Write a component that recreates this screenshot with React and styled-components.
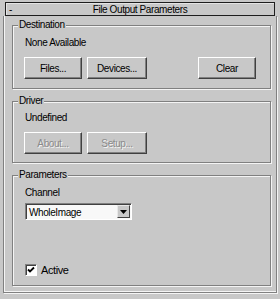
import styled, { createGlobalStyle } from 'styled-components';

const GlobalStyle = createGlobalStyle`
  html, body {
    margin: 0;
    padding: 0;
    background: #c8c8c8;
  }
  body {
    font-family: 'Liberation Sans', Arial, sans-serif;
    font-size: 10px;
    letter-spacing: -0.4px;
    color: #000;
  }
`;

const Rollout = styled.div`
  width: 280px;
  height: 299px;
  box-sizing: border-box;
  padding: 2px 3px 0 3px;
  display: flex;
  flex-direction: column;
`;

const TitleBar = styled.div`
  height: 14px;
  margin: 0 2px;
  box-sizing: border-box;
  border: 1px solid #1e1e1e;
  box-shadow: inset 1px 1px 0 #e4e4e4;
  display: flex;
  align-items: center;
  position: relative;
  z-index: 1;
`;

const Toggle = styled.span`
  width: 14px;
  padding-left: 3px;
`;

const Title = styled.span`
  flex: 1;
  text-align: center;
  padding-right: 17px;
`;

const Panel = styled.div`
  height: 277px;
  box-sizing: border-box;
  border: 1px solid #808080;
  border-top: none;
  box-shadow: inset 1px -1px 0 #f4f4f4, 1px 1px 0 #f4f4f4;
  padding: 3px 5px 0 8px;
  display: flex;
  flex-direction: column;
  gap: 6px;
`;

const Group = styled.fieldset`
  margin: 0;
  min-width: 0;
  height: ${(p) => p.$h}px;
  box-sizing: border-box;
  padding: 0 14px 0 12px;
  border: 1px solid #808080;
  box-shadow: inset 1px 1px 0 #f4f4f4, 1px 1px 0 #f4f4f4;
`;

const Legend = styled.legend`
  margin-left: -7px;
  padding: 0 1px;
  line-height: 12px;
  background: #c8c8c8;
`;

const Label = styled.div`
  line-height: 12px;
  margin-top: ${(p) => p.$top || 0}px;
`;

const ButtonRow = styled.div`
  display: flex;
  gap: 5px;
  margin-top: 8px;
  margin-left: -1px;
`;

const Button = styled.button`
  width: ${(p) => p.$w || 58}px;
  height: 22px;
  padding: 0;
  font: inherit;
  letter-spacing: inherit;
  background: #c8c8c8;
  color: ${(p) => (p.disabled ? '#8a8a8a' : '#000')};
  text-shadow: ${(p) => (p.disabled ? '1px 1px 0 #f4f4f4' : 'none')};
  border: 1px solid;
  border-color: #fff #404040 #404040 #fff;
  box-shadow: inset -1px -1px 0 #808080;
  margin-left: ${(p) => (p.$push ? 'auto' : '0')};
`;

const Select = styled.div`
  margin-top: 4px;
  width: 107px;
  height: 17px;
  box-sizing: border-box;
  border: 1px solid;
  border-color: #808080 #fff #fff #808080;
  box-shadow: inset 1px 1px 0 #404040;
  background: #f8f8f8;
  display: flex;
  align-items: center;
  padding: 1px 1px 0 3px;
`;

const SelectText = styled.span`
  flex: 1;
`;

const Arrow = styled.div`
  width: 13px;
  height: 13px;
  box-sizing: border-box;
  border: 1px solid;
  border-color: #e8e8e8 #404040 #404040 #e8e8e8;
  background: #c8c8c8;
  display: flex;
  align-items: center;
  justify-content: center;
  margin-top: -1px;
`;

const CheckRow = styled.label`
  display: flex;
  align-items: center;
  gap: 4px;
  margin-top: 44px;
  font-size: 11px;
`;

const CheckBox = styled.span`
  width: 12px;
  height: 12px;
  box-sizing: border-box;
  border: 1px solid;
  border-color: #808080 #fff #fff #808080;
  box-shadow: inset 1px 1px 0 #404040;
  background: #fff;
  display: flex;
  align-items: center;
  justify-content: center;
`;

export default function App() {
  return (
    <>
      <GlobalStyle />
      <Rollout>
        <TitleBar>
          <Toggle>-</Toggle>
          <Title>File Output Parameters</Title>
        </TitleBar>
        <Panel>
          <Group $h={70}>
            <Legend>Destination</Legend>
            <Label $top={6}>None Available</Label>
            <ButtonRow>
              <Button>Files...</Button>
              <Button $w={60}>Devices...</Button>
              <Button $push>Clear</Button>
            </ButtonRow>
          </Group>
          <Group $h={68}>
            <Legend>Driver</Legend>
            <Label $top={5}>Undefined</Label>
            <ButtonRow>
              <Button disabled>About...</Button>
              <Button $w={60} disabled>Setup...</Button>
            </ButtonRow>
          </Group>
          <Group $h={117}>
            <Legend>Parameters</Legend>
            <Label $top={6}>Channel</Label>
            <Select>
              <SelectText>WholeImage</SelectText>
              <Arrow>
                <svg width="7" height="4" viewBox="0 0 7 4">
                  <path d="M0 0h7L3.5 4z" fill="#000" />
                </svg>
              </Arrow>
            </Select>
            <CheckRow>
              <CheckBox>
                <svg width="8" height="8" viewBox="0 0 8 8">
                  <path d="M1 3.5l2 2L7 1.5" stroke="#000" strokeWidth="1.8" fill="none" />
                </svg>
              </CheckBox>
              Active
            </CheckRow>
          </Group>
        </Panel>
      </Rollout>
    </>
  );
}
